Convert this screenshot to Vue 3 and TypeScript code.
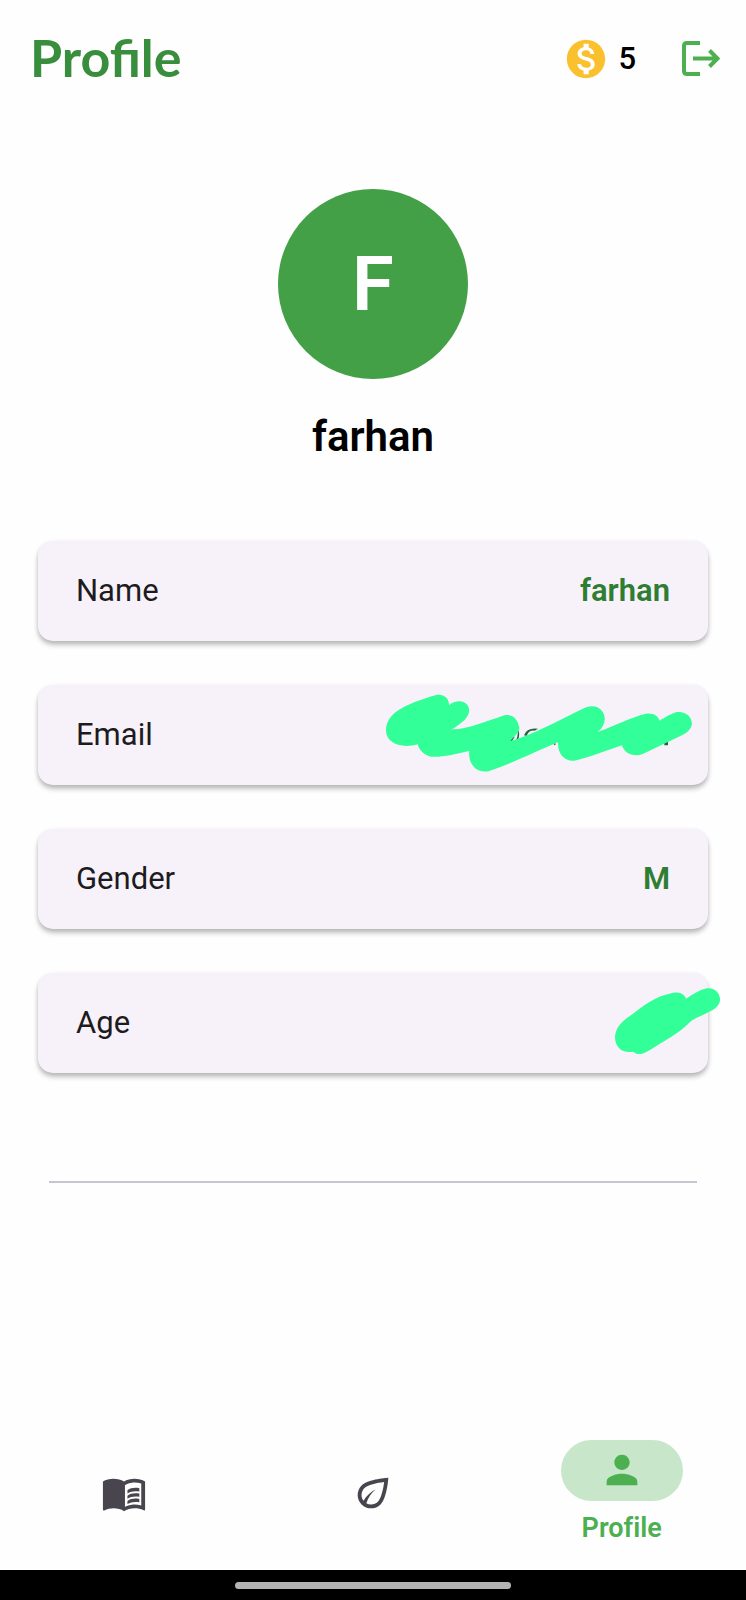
<script setup lang="ts">
interface Field {
  label: string
  value: string
  cover?: 'email' | 'age'
}

interface Tab {
  id: 'book' | 'leaf' | 'person'
  name: string
  active: boolean
}

const user = { name: 'farhan', initial: 'F', coins: 5 }

const fields: Field[] = [
  { label: 'Name', value: user.name },
  { label: 'Email', value: '', cover: 'email' },
  { label: 'Gender', value: 'M' },
  { label: 'Age', value: '', cover: 'age' },
]

const tabs: Tab[] = [
  { id: 'book', name: 'Library', active: false },
  { id: 'leaf', name: 'Plants', active: false },
  { id: 'person', name: 'Profile', active: true },
]
</script>

<template>
  <div class="screen">
    <header class="bar">
      <h1 class="title">Profile</h1>
      <div class="coins">
        <svg class="icon coin" viewBox="0 0 24 24" aria-hidden="true">
          <path d="M12 2C6.48 2 2 6.48 2 12s4.48 10 10 10 10-4.48 10-10S17.52 2 12 2zm1.41 16.09V20h-2.67v-1.93c-1.71-.36-3.16-1.46-3.27-3.4h1.96c.1 1.05.82 1.87 2.65 1.87 1.96 0 2.4-.98 2.4-1.59 0-.83-.44-1.61-2.67-2.14-2.48-.6-4.18-1.62-4.18-3.67 0-1.72 1.39-2.84 3.11-3.21V4h2.67v1.95c1.86.45 2.79 1.86 2.85 3.39H14.3c-.05-1.11-.64-1.87-2.22-1.87-1.5 0-2.4.68-2.4 1.64 0 .84.65 1.39 2.67 1.91s4.18 1.39 4.18 3.91c-.01 1.83-1.38 2.83-3.12 3.16z" />
        </svg>
        <span>{{ user.coins }}</span>
      </div>
      <button class="logout" type="button" aria-label="Log out">
        <svg viewBox="0 0 40 40" aria-hidden="true">
          <path d="M20 4H7Q4 4 4 7V32Q4 35 7 35H20M13 19.500H37M29.500 11.500L37.500 19.500L29.500 27.500" />
        </svg>
      </button>
    </header>

    <main class="content">
      <div class="avatar">{{ user.initial }}</div>
      <h2 class="name">{{ user.name }}</h2>

      <dl class="fields">
        <div v-for="field in fields" :key="field.label" class="card">
          <dt>{{ field.label }}</dt>
          <dd>{{ field.value }}</dd>
          <svg v-if="field.cover === 'email'" class="cover cover-email" viewBox="0 0 990 300" aria-hidden="true">
            <path class="speck" d="M228 149h14v9h-14zM865 184h11v12h-11zM528 185l12 7-4 4zM424 144q10 16 2 36l-7 3q10-18 5-39zM402 182l8-14 6 3-8 12zM444 166q8-24 42-20l-10 6q-18-2-24 16z" />
            <path d="M30 150C32 100 80 75 180 45C203 40 220 55 219 76C235 62 262 58 275 76C288 98 274 121 225 150C270 148 330 125 385 106C410 100 428 120 430 145C430 155 420 165 402 184C470 165 540 125 630 82C648 76 668 78 680 95C692 115 687 137 665 156C720 135 770 110 810 101C835 98 848 110 850 122C875 108 880 104 900 97C925 92 948 108 948 132C946 147 935 158 915 167L800 222C775 232 745 222 738 196C700 208 640 233 595 242C565 244 545 222 546 187C490 210 420 245 340 273C300 282 275 250 280 212C240 222 200 232 165 230C145 226 130 212 125 193C70 208 28 185 30 150Z" />
          </svg>
          <svg v-if="field.cover === 'age'" class="cover cover-age" viewBox="150 490 342 231" aria-hidden="true">
            <path d="M165 655C165 625 185 605 215 585C250 560 280 530 340 519C363 515 375 526 378 537C400 524 420 510 440 506C465 502 482 522 480 542C478 560 465 570 430 585C400 598 390 606 385 612C350 645 310 665 300 672C270 690 250 706 235 703C228 702 222 697 218 696C190 702 166 685 165 655Z" />
          </svg>
        </div>
      </dl>

      <hr class="divider" />
    </main>

    <nav class="tabs" aria-label="Main">
      <a
        v-for="tab in tabs"
        :key="tab.id"
        class="tab"
        :class="{ active: tab.active }"
        href="#"
        :aria-label="tab.name"
        :aria-current="tab.active ? 'page' : undefined"
      >
        <span class="pill">
          <svg class="icon" viewBox="0 0 24 24" aria-hidden="true">
            <template v-if="tab.id === 'book'">
              <path fill-rule="evenodd" d="M17.500 4.500c-1.950 0-4.050.4-5.500 1.500-1.450-1.100-3.550-1.500-5.500-1.500S2.450 4.900 1 6v14.650c0 .65.730.450.750.450C3.100 20.450 5.050 20 6.500 20c1.950 0 4.050.4 5.500 1.500 1.350-.85 3.800-1.500 5.500-1.500 1.650 0 3.350.3 4.750 1.050.410.210.750-.190.750-.450V6c-1.490-1.120-3.630-1.500-5.500-1.500zM21 18.500c-1.100-.35-2.300-.5-3.500-.5-1.700 0-4.150.65-5 1.300V8c.85-.85 3.300-1.500 5-1.500 1.200 0 2.400.150 3.500.5v11.500z" />
              <path d="M13.800 10.600C15.500 9.300 17.500 9.100 20 9.500V11.200C17.500 10.800 15.500 11.100 13.800 12.200ZM13.800 13.400C15.500 12.100 17.500 11.900 20 12.300V14C17.500 13.600 15.500 13.900 13.800 15ZM13.800 16.200C15.500 14.900 17.500 14.700 20 15.100V16.800C17.500 16.400 15.500 16.700 13.800 17.800Z" />
            </template>
            <path v-else-if="tab.id === 'leaf'" d="M6.050 8.050c-2.730 2.730-2.730 7.170 0 9.900C7.420 19.320 9.210 20 11 20s3.580-.68 4.950-2.050C19.430 14.470 20 4 20 4S9.530 4.570 6.050 8.050zM14.540 16.540C13.590 17.480 12.340 18 11 18c-.89 0-1.730-.25-2.480-.68.920-2.880 2.620-5.410 4.880-7.320-2.630 1.360-4.840 3.460-6.370 6-1.480-1.960-1.350-4.750.440-6.540C9.210 7.720 14.040 6.650 17.800 6.200 17.350 9.960 16.280 14.790 14.540 16.540z" />
            <path v-else d="M12 12c2.210 0 4-1.790 4-4s-1.790-4-4-4-4 1.790-4 4 1.790 4 4 4zm0 2c-2.670 0-8 1.340-8 4v2h16v-2c0-2.660-5.330-4-8-4z" />
          </svg>
        </span>
        <span v-if="tab.active" class="tab-label">{{ tab.name }}</span>
      </a>
    </nav>

    <div class="system-bar"><span class="handle"></span></div>
  </div>
</template>

<style>
body {
  margin: 0;
  background: #fefefe;
}
</style>

<style scoped>
.screen {
  display: flex;
  flex-direction: column;
  min-height: 100vh;
  font-family: Roboto, "Liberation Sans", sans-serif;
  font-variant-ligatures: none;
  color: #000;
}

.bar {
  display: flex;
  align-items: center;
  height: 118px;
  padding: 0 22px 0 30px;
}

.title {
  flex: 1;
  margin: 0;
  padding-bottom: 4px;
  font: 700 52px/60px Lato, sans-serif;
  font-variant-ligatures: normal;
  color: #388e3c;
}

.icon {
  display: block;
  width: 46px;
  height: 46px;
  fill: currentColor;
}

.coins {
  display: flex;
  align-items: center;
  gap: 9px;
  font-size: 31px;
  font-weight: 500;
  line-height: 36px;
}

.coin {
  color: #fbc02d;
}

.logout {
  width: 44px;
  height: 40px;
  margin-left: 44px;
  padding: 0;
  border: 0;
  background: none;
  cursor: pointer;
}

.logout svg {
  display: block;
  width: 40px;
  height: 40px;
  fill: none;
  stroke: #4caf50;
  stroke-width: 4;
}

.content {
  flex: 1;
  display: flex;
  flex-direction: column;
  align-items: center;
  padding: 71px 38px 0;
}

.avatar {
  display: grid;
  place-items: center;
  width: 190px;
  height: 190px;
  border-radius: 50%;
  background: #43a047;
  color: #fff;
  font-size: 76px;
  font-weight: 600;
  line-height: 88px;
}

.name {
  margin: 33px 0 79px;
  font-size: 42px;
  font-weight: 600;
  line-height: 50px;
}

.fields {
  display: flex;
  flex-direction: column;
  gap: 44px;
  width: 100%;
  margin: 0;
}

.card {
  position: relative;
  display: flex;
  align-items: center;
  justify-content: space-between;
  box-sizing: border-box;
  height: 100px;
  padding: 0 38px;
  border-radius: 15px;
  background: #f7f2fa;
  box-shadow: 0 4px 5px rgba(0, 0, 0, 0.24), 0 1px 4px rgba(0, 0, 0, 0.08);
  font-size: 31px;
  line-height: 44px;
}

dt {
  color: #1d1b20;
}

dd {
  margin: 0;
  color: #2e7d32;
  font-weight: 600;
}

.cover {
  position: absolute;
  fill: #33ff99;
}

.cover-email {
  top: -5px;
  right: 2px;
  width: 330px;
  height: 100px;
}

.cover-age {
  top: 10px;
  right: -16px;
  width: 114px;
  height: 77px;
}

.speck {
  fill: #20633c;
}

.divider {
  align-self: stretch;
  height: 2px;
  margin: 108px 11px 0;
  border: 0;
  background: #cac4d0;
}

.tabs {
  display: grid;
  grid-template-columns: repeat(3, 1fr);
  height: 150px;
  padding-bottom: 2px;
}

.tab {
  display: flex;
  flex-direction: column;
  align-items: center;
  justify-content: center;
  gap: 8px;
  color: #49454f;
  text-decoration: none;
}

.active {
  color: #4caf50;
}

.pill {
  display: grid;
  place-items: center;
  width: 122px;
  height: 61px;
  border-radius: 31px;
}

.active .pill {
  background: #c8e6c9;
}

.tab-label {
  font-size: 27px;
  font-weight: 600;
  line-height: 38px;
}

.system-bar {
  display: grid;
  place-items: center;
  height: 30px;
  background: #000;
}

.handle {
  width: 37%;
  height: 7px;
  border-radius: 4px;
  background: #b3b3b3;
}
</style>
